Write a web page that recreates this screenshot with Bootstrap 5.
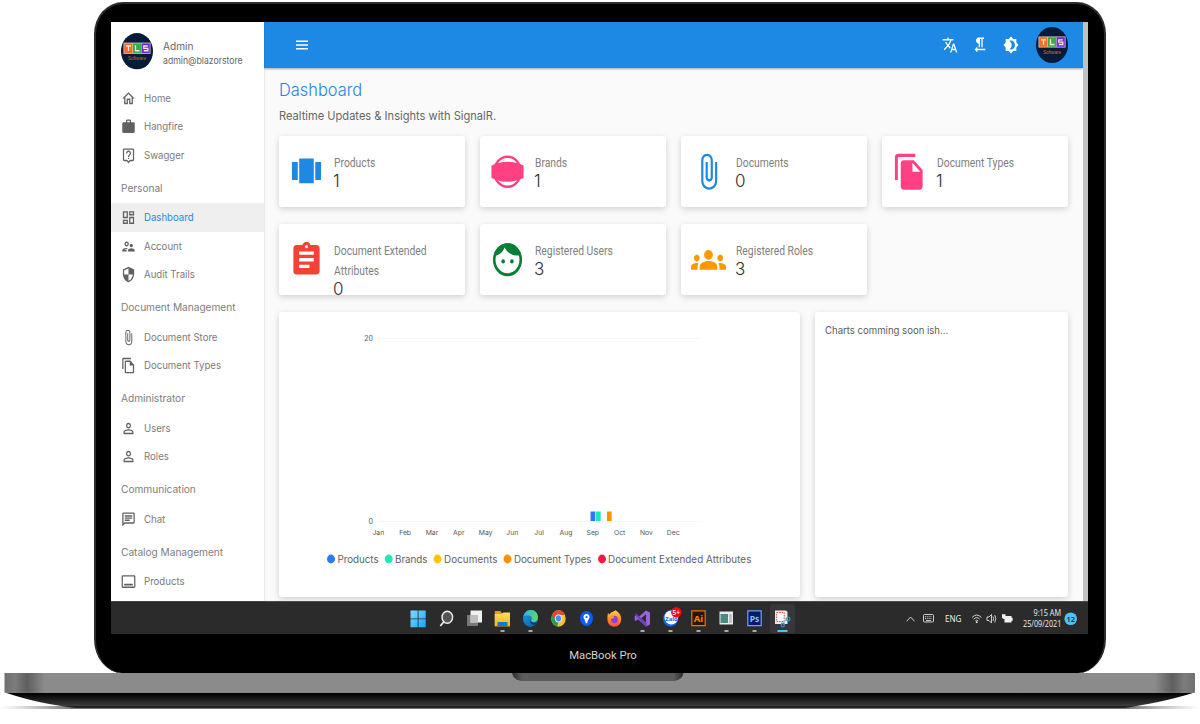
<!DOCTYPE html>
<html lang="en">
<head>
<meta charset="utf-8">
<meta name="viewport" content="width=device-width, initial-scale=1">
<title>Dashboard</title>
<link href="https://cdn.jsdelivr.net/npm/bootstrap@5.3.0/dist/css/bootstrap.min.css" rel="stylesheet">
<style>
  body { width: 1200px; height: 724px; overflow: hidden; background: #fff; font-family: "Inter", "Liberation Sans", sans-serif; color: #424242; line-height: 1; }
  svg { display: block; flex: none; }
  .lid { width: 1012px; height: 671px; margin: 2px 0 0 94px; padding: 18px 16px 0 15px; background: #000; border: 2px solid #2c2d2e; border-bottom: 0; border-radius: 29px 29px 28px 28px / 32px 32px 34px 34px; }
  .screen { height: 612px; }
  .app { height: 579px; background: #fafafa; }
  .narrow { display: inline-block; transform-origin: 0 50%; white-space: nowrap; }
  .sidebar { width: 153px; background: #fff; box-shadow: 0 0 2px rgba(0,0,0,.2); z-index: 1; }
  .who { height: 61.75px; padding: 11px 0 0 10px; }
  .who-name { margin-left: 10px; padding-top: 8px; font-size: 10.1px; color: #666; }
  .who-mail { font-size: 9.3px; margin-top: 4.5px; }
  .who-mail .narrow { transform: scaleX(.935); }
  .side-link { height: 28.5px; padding: 0 0 0 10.2px; font-size: 10.4px; color: #7a7a7a; gap: 7.5px; }
  .side-link svg { width: 15px; height: 17px; fill: #616161; }
  .side-link .narrow { transform: translateY(.7px) scaleX(.925); }
  .side-link.active { background: #efefef; color: #2f86e0; }
  .side-head { height: 34px; padding: 13.3px 0 0 10px; font-size: 10.2px; letter-spacing: -.05px; color: #808080; }
  .topbar { height: 46px; background: #1e88e5; padding: 0 15px 0 30px; box-shadow: 0 1px 2px rgba(0,0,0,.35); }
  .topbar .ico { width: 16px; height: 18px; fill: #fff; }
  .tools { gap: 14.7px; }
  .me-photo { margin-left: 2.2px; }
  .scroller { width: 5px; flex: none; background: #c1c1c1; }
  .page { padding: 13px 15px 0; }
  .page-title { font-size: 17px; font-weight: 300; color: #2783e4; margin: 0; line-height: 18px; }
  .page-title .narrow { transform: scaleX(.965); }
  .page-sub { font-size: 12px; color: #666; line-height: 16px; margin: 9px 0 12px; }
  .page-sub .narrow { transform: scaleX(.925); }
  .tiles { --bs-gutter-x: 15px; --bs-gutter-y: 17px; }
  .tile { height: 71px; background: #fff; border-radius: 3px; box-shadow: 0 2px 6px rgba(0,0,0,.17); padding-left: 10px; }
  .tile > svg { width: 35px; height: 39.5px; margin: 16px 9.5px 0 0; }
  .tile-text { padding-top: 17px; }
  .tile-label { font-family: Roboto, "Liberation Sans", sans-serif; font-size: 12px; line-height: 20px; color: #808080; }
  .tile-label .narrow { transform: scaleX(.86); }
  .tile-num { font-size: 17px; font-weight: 300; line-height: 17px; color: #303030; margin-left: -.5px; }
  .panel { height: 285px; background: #fff; border-radius: 3px; box-shadow: 0 2px 6px rgba(0,0,0,.17); }
  .soon { font-size: 10.2px; padding: 12.8px 0 0 10px; color: #5a5a5a; }
  .soon .narrow { transform: scaleX(.94); }
  .taskbar { height: 33px; background: #2b2b2b; border-top: 1px solid #4b4b4b; color: #eee; font-family: "Open Sans", "Noto Sans", sans-serif; font-size: 8px; }
  .apps { margin-left: 293px; }
  .brand-name { font-family: Roboto, "Liberation Sans", sans-serif; font-size: 11.3px; color: #d4d4d4; margin-top: 16px; padding-left: 7px; }
</style>
</head>
<body>
<svg width="0" height="0" class="position-absolute">
  <defs>
    <symbol id="avatar" viewBox="0 0 32 36" preserveAspectRatio="none">
      <ellipse cx="16" cy="18" rx="16" ry="18" fill="#071a3a"/>
      <rect x="2.5" y="9.5" width="27" height="11" fill="#e8d8d0"/>
      <rect x="3.2" y="10.2" width="8.3" height="9.6" fill="#f46d22"/>
      <rect x="12" y="10.2" width="8" height="9.6" fill="#2fb04a"/>
      <rect x="20.5" y="10.2" width="8.3" height="9.6" fill="#6a2be0"/>
      <path d="M5 12.8h5M7.5 12.8v5M14.5 12.2v5.3h4M26.8 12.800h-4v2.300h4v2.400h-4" fill="none" stroke="#ffe6dc" stroke-width="1.3"/>
      <text x="16" y="26.6" font-size="4.6" text-anchor="middle" fill="#c87020" font-family="Liberation Sans, sans-serif">Software</text>
    </symbol>
    <symbol id="person" viewBox="0 0 24 24" preserveAspectRatio="none"><path d="M12 5.9c1.16 0 2.1.94 2.1 2.1s-.94 2.1-2.1 2.1S9.9 9.16 9.9 8s.94-2.1 2.1-2.1m0 9c2.97 0 6.1 1.46 6.1 2.1v1.1H5.9V17c0-.64 3.13-2.1 6.1-2.1M12 4C9.79 4 8 5.79 8 8s1.79 4 4 4 4-1.79 4-4-1.79-4-4-4zm0 9c-2.67 0-8 1.34-8 4v3h16v-3c0-2.66-5.33-4-8-4z"/></symbol>
    <symbol id="clip" viewBox="0 0 24 24" preserveAspectRatio="none"><path d="M16.5 6v11.5c0 2.21-1.79 4-4 4s-4-1.79-4-4V5c0-1.38 1.12-2.5 2.5-2.5s2.5 1.12 2.5 2.5v10.5c0 .55-.45 1-1 1s-1-.45-1-1V6H10v9.5c0 1.38 1.12 2.5 2.5 2.5s2.5-1.12 2.5-2.5V5c0-2.21-1.79-4-4-4S7 2.79 7 5v12.5c0 3.04 2.46 5.5 5.5 5.5s5.5-2.46 5.5-5.5V6h-1.5z"/></symbol>
  </defs>
</svg>
<div class="lid">
  <div class="screen d-flex flex-column">
    <div class="app d-flex">
      <nav class="sidebar d-flex flex-column flex-shrink-0">
        <div class="who d-flex">
          <svg width="32" height="36.5"><use href="#avatar"/></svg>
          <div class="who-name"><div>Admin</div><div class="who-mail"><span class="narrow">admin@blazorstore</span></div></div>
        </div>
        <div class="side-link d-flex align-items-center"><svg viewBox="0 0 24 24" preserveAspectRatio="none"><path d="M12 5.69l5 4.5V18h-2v-6H9v6H7v-7.81l5-4.5M12 3L2 12h3v8h6v-6h2v6h6v-8h3L12 3z"/></svg><span class="narrow">Home</span></div>
        <div class="side-link d-flex align-items-center"><svg viewBox="0 0 24 24" preserveAspectRatio="none"><path d="M20 6h-4V4c0-1.11-.89-2-2-2h-4c-1.11 0-2 .89-2 2v2H4c-1.11 0-1.99.89-1.99 2L2 19c0 1.11.89 2 2 2h16c1.11 0 2-.89 2-2V8c0-1.11-.89-2-2-2zm-6 0h-4V4h4v2z"/></svg><span class="narrow">Hangfire</span></div>
        <div class="side-link d-flex align-items-center"><svg viewBox="0 0 24 24" preserveAspectRatio="none"><path d="M19 2H5c-1.11 0-2 .9-2 2v14c0 1.1.89 2 2 2h4l3 3 3-3h4c1.1 0 2-.9 2-2V4c0-1.1-.9-2-2-2zm0 16h-4.83l-.59.59L12 20.17l-1.59-1.59-.58-.58H5V4h14v14zm-8-3h2v2h-2zm1-8c1.1 0 2 .9 2 2 0 2-3 1.75-3 5h2c0-2.25 3-2.5 3-5 0-2.21-1.79-4-4-4S8 6.79 8 9h2c0-1.1.9-2 2-2z"/></svg><span class="narrow">Swagger</span></div>
        <div class="side-head">Personal</div>
        <div class="side-link active d-flex align-items-center"><svg viewBox="0 0 24 24" preserveAspectRatio="none"><path d="M19 5v2h-4V5h4M9 5v6H5V5h4m10 8v6h-4v-6h4M9 17v2H5v-2h4M21 3h-8v6h8V3zM11 3H3v10h8V3zm10 8h-8v10h8V11zm-10 4H3v6h8v-6z"/></svg><span class="narrow">Dashboard</span></div>
        <div class="side-link d-flex align-items-center"><svg viewBox="0 0 24 24" preserveAspectRatio="none"><path d="M9 12c1.93 0 3.5-1.57 3.5-3.5S10.93 5 9 5 5.5 6.57 5.5 8.5 7.07 12 9 12zm0-5c.83 0 1.5.67 1.5 1.5S9.83 10 9 10s-1.5-.67-1.5-1.5S8.17 7 9 7zm.05 10H4.77c.99-.5 2.7-1 4.23-1 .11 0 .23.01.34.01.34-.73.93-1.33 1.64-1.81-.73-.13-1.42-.2-1.98-.2-2.34 0-7 1.17-7 3.5V19h7v-1.5c0-.17.02-.34.05-.5zm7.45-2.5c-1.84 0-5.5 1.01-5.5 3V19h11v-1.5c0-1.99-3.66-3-5.5-3zm1.21-1.82c.76-.43 1.29-1.24 1.29-2.18C19 9.12 17.88 8 16.5 8S14 9.12 14 10.5c0 .94.53 1.75 1.29 2.18.36.2.77.32 1.21.32s.85-.12 1.21-.32z"/></svg><span class="narrow">Account</span></div>
        <div class="side-link d-flex align-items-center"><svg viewBox="0 0 24 24" preserveAspectRatio="none"><path d="M12 1L3 5v6c0 5.55 3.84 10.74 9 12 5.16-1.26 9-6.45 9-12V5l-9-4zm0 10.99h7c-.53 4.12-3.28 7.79-7 8.94V12H5V6.3l7-3.11v8.8z"/></svg><span class="narrow">Audit Trails</span></div>
        <div class="side-head">Document Management</div>
        <div class="side-link d-flex align-items-center"><svg><use href="#clip"/></svg><span class="narrow">Document Store</span></div>
        <div class="side-link d-flex align-items-center"><svg viewBox="0 0 24 24" preserveAspectRatio="none"><path d="M16 1H4c-1.1 0-2 .9-2 2v14h2V3h12V1zm-1 4H8c-1.1 0-1.99.9-1.99 2L6 21c0 1.1.89 2 1.99 2H19c1.1 0 2-.9 2-2V11l-6-6zM8 21V7h6v5h5v9H8z"/></svg><span class="narrow">Document Types</span></div>
        <div class="side-head">Administrator</div>
        <div class="side-link d-flex align-items-center"><svg><use href="#person"/></svg><span class="narrow">Users</span></div>
        <div class="side-link d-flex align-items-center"><svg><use href="#person"/></svg><span class="narrow">Roles</span></div>
        <div class="side-head">Communication</div>
        <div class="side-link d-flex align-items-center"><svg viewBox="0 0 24 24" preserveAspectRatio="none"><path d="M4 4h16v12H5.17L4 17.17V4m0-2c-1.1 0-1.99.9-1.99 2L2 22l4-4h14c1.1 0 2-.9 2-2V4c0-1.1-.9-2-2-2H4zm2 10h8v2H6v-2zm0-3h12v2H6V9zm0-3h12v2H6V6z"/></svg><span class="narrow">Chat</span></div>
        <div class="side-head">Catalog Management</div>
        <div class="side-link d-flex align-items-center"><svg viewBox="0 0 24 24" preserveAspectRatio="none"><path d="M21 3H3c-1.1 0-2 .9-2 2v14c0 1.1.9 2 2 2h18c1.1 0 2-.9 2-2V5c0-1.1-.9-2-2-2zm0 16H3V5h18v14zM5 15h14v2.5H5z"/></svg><span class="narrow">Products</span></div>
      </nav>
      <div class="flex-grow-1">
        <header class="topbar d-flex align-items-center">
          <svg class="ico" viewBox="0 0 24 24" preserveAspectRatio="none"><path d="M3 18h18v-2H3v2zm0-5h18v-2H3v2zm0-7v2h18V6H3z"/></svg>
          <div class="tools ms-auto d-flex align-items-center">
            <svg class="ico" viewBox="0 0 24 24" preserveAspectRatio="none"><path d="M12.87 15.07l-2.54-2.51.03-.03c1.74-1.94 2.98-4.17 3.71-6.53H17V4h-7V2H8v2H1v1.99h11.17C11.5 7.92 10.44 9.75 9 11.35 8.07 10.32 7.3 9.19 6.69 8h-2c.73 1.63 1.73 3.17 2.98 4.56l-5.09 5.02L4 19l5-5 3.11 3.11.76-2.04zM18.5 10h-2L12 22h2l1.12-3h4.75L21 22h2l-4.5-12zm-2.62 7l1.62-4.33L19.12 17h-3.24z"/></svg>
            <svg class="ico" viewBox="0 0 24 24" preserveAspectRatio="none"><path d="M10 10v5h2V4h2v11h2V4h2V2h-8C7.79 2 6 3.79 6 6s1.79 4 4 4zm-2 7v-3l-4 4 4 4v-3h12v-2H8z"/></svg>
            <svg class="ico" viewBox="0 0 24 24" preserveAspectRatio="none"><path d="M20 8.69V4h-4.69L12 .69 8.69 4H4v4.69L.69 12 4 15.31V20h4.69L12 23.31 15.31 20H20v-4.69L23.31 12 20 8.69zM12 18c-.89 0-1.74-.2-2.5-.55C11.56 16.5 13 14.42 13 12s-1.44-4.5-3.5-5.45C10.26 6.2 11.11 6 12 6c3.31 0 6 2.69 6 6s-2.69 6-6 6z"/></svg>
            <svg class="me-photo" width="32" height="36"><use href="#avatar"/></svg>
          </div>
        </header>
        <main class="page">
          <h1 class="page-title"><span class="narrow">Dashboard</span></h1>
          <p class="page-sub"><span class="narrow">Realtime Updates &amp; Insights with SignalR.</span></p>
          <div class="row tiles">
            <div class="col-3"><div class="tile d-flex"><svg viewBox="0 0 24 24" preserveAspectRatio="none" fill="#1e88e5"><path d="M7 19h10V4H7v15zm-5-2h4V6H2v11zM18 6v11h4V6h-4z"/></svg><div class="tile-text"><div class="tile-label"><span class="narrow">Products</span></div><div class="tile-num">1</div></div></div></div>
            <div class="col-3"><div class="tile d-flex"><svg viewBox="0 0 24 24" preserveAspectRatio="none" fill="#ff4081"><circle cx="12" cy="12" r="9.1" fill="none" stroke="#ff4081" stroke-width="1.6"/><path d="M1 8.2L4 7.200Q12 4.500 20 7.200L23 8.200v7.600L20 16.800Q12 19.500 4 16.800L1 15.800z"/></svg><div class="tile-text"><div class="tile-label"><span class="narrow">Brands</span></div><div class="tile-num">1</div></div></div></div>
            <div class="col-3"><div class="tile d-flex"><svg fill="#1e88e5"><use href="#clip"/></svg><div class="tile-text"><div class="tile-label"><span class="narrow">Documents</span></div><div class="tile-num">0</div></div></div></div>
            <div class="col-3"><div class="tile d-flex"><svg viewBox="0 0 24 24" preserveAspectRatio="none" fill="#ff4081"><path d="M16 1H4c-1.1 0-2 .9-2 2v14h2V3h12V1zm-1 4l6 6v10c0 1.1-.9 2-2 2H7.99C6.89 23 6 22.1 6 21l.01-14c0-1.1.89-2 1.99-2h7zm-1 7h5.5L14 6.5V12z"/></svg><div class="tile-text"><div class="tile-label"><span class="narrow">Document Types</span></div><div class="tile-num">1</div></div></div></div>
            <div class="col-3"><div class="tile d-flex"><svg viewBox="0 0 24 24" preserveAspectRatio="none" fill="#f44336"><path d="M19 3h-4.18C14.4 1.84 13.3 1 12 1c-1.3 0-2.4.84-2.82 2H5c-1.1 0-2 .9-2 2v14c0 1.1.9 2 2 2h14c1.1 0 2-.9 2-2V5c0-1.1-.9-2-2-2zm-7 0c.55 0 1 .45 1 1s-.45 1-1 1-1-.45-1-1 .45-1 1-1zm2 14H7v-2h7v2zm3-4H7v-2h10v2zm0-4H7V7h10v2z"/></svg><div class="tile-text"><div class="tile-label"><span class="narrow">Document Extended<br>Attributes</span></div><div class="tile-num">0</div></div></div></div>
            <div class="col-3"><div class="tile d-flex"><svg viewBox="0 0 24 24" preserveAspectRatio="none" fill="#087f35"><circle cx="12" cy="12" r="9.1" fill="none" stroke="#087f35" stroke-width="1.8"/><path d="M3 9.8C6.500 9 9 7.200 10 4.500c2 3.500 6 5.600 11.200 4.800C20 4.500 16.500 2 12 2S3.500 5 3 9.800z"/><circle cx="9" cy="13" r="1.25"/><circle cx="15" cy="13" r="1.25"/></svg><div class="tile-text"><div class="tile-label"><span class="narrow">Registered Users</span></div><div class="tile-num">3</div></div></div></div>
            <div class="col-3"><div class="tile d-flex"><svg viewBox="0 0 24 24" preserveAspectRatio="none" fill="#ff9800"><path d="M12 12.75c1.63 0 3.07.39 4.24.9 1.08.48 1.76 1.56 1.76 2.73V18H6v-1.61c0-1.18.68-2.26 1.76-2.73 1.17-.52 2.61-.91 4.24-.91zM4 13c1.1 0 2-.9 2-2s-.9-2-2-2-2 .9-2 2 .9 2 2 2zm1.13 1.1c-.37-.06-.74-.1-1.13-.1-.99 0-1.93.21-2.78.58C.48 14.9 0 15.62 0 16.43V18h4.5v-1.61c0-.83.23-1.61.63-2.29zM20 13c1.1 0 2-.9 2-2s-.9-2-2-2-2 .9-2 2 .9 2 2 2zm4 3.43c0-.81-.48-1.53-1.22-1.85-.85-.37-1.79-.58-2.78-.58-.39 0-.76.04-1.13.1.4.68.63 1.46.63 2.29V18H24v-1.57zM12 6c1.66 0 3 1.34 3 3s-1.34 3-3 3-3-1.34-3-3 1.34-3 3-3z"/></svg><div class="tile-text"><div class="tile-label"><span class="narrow">Registered Roles</span></div><div class="tile-num">3</div></div></div></div>
            <div class="w-100 m-0"></div>
            <div class="col-8">
              <div class="panel">
                <svg width="521" height="285" viewBox="279 312 521 285" font-family="Inter, sans-serif">
                  <path d="M378 338.500h322M378 521.500h322" stroke="#f6f6f6"/>
                  <g font-size="7" fill="#555" text-anchor="end"><text x="373" y="341.200">20</text><text x="373" y="524.200">0</text></g>
                  <g font-size="6.800" fill="#555" text-anchor="middle">
                    <text x="378.300" y="535">Jan</text><text x="405.100" y="535">Feb</text><text x="432" y="535">Mar</text><text x="458.800" y="535">Apr</text><text x="485.600" y="535">May</text><text x="512.300" y="535">Jun</text><text x="539.100" y="535">Jul</text><text x="566" y="535">Aug</text><text x="592.800" y="535">Sep</text><text x="619.600" y="535">Oct</text><text x="646.400" y="535">Nov</text><text x="673.200" y="535">Dec</text>
                  </g>
                  <path d="M590.500 511.500h4.800v9.500h-4.800z" fill="#2979ff"/><path d="M596 511.500h4.700v9.500h-4.700z" fill="#1de9b6"/><path d="M607 511.500h4.600v9.500h-4.600z" fill="#ff9100"/>
                  <ellipse cx="331" cy="559" rx="4" ry="4.400" fill="#2979ff"/><ellipse cx="388.700" cy="559" rx="4" ry="4.400" fill="#1de9b6"/><ellipse cx="437.500" cy="559" rx="4" ry="4.400" fill="#ffc400"/><ellipse cx="507.500" cy="559" rx="4" ry="4.400" fill="#ff9100"/><ellipse cx="602" cy="559" rx="4" ry="4.400" fill="#ff1744"/>
                  <g font-size="9.800" fill="#616161">
                    <text x="337.600" y="563" textLength="41">Products</text><text x="395" y="563" textLength="32.500">Brands</text><text x="444" y="563" textLength="53.500">Documents</text><text x="514" y="563" textLength="77.500">Document Types</text><text x="608" y="563" textLength="143.300">Document Extended Attributes</text>
                  </g>
                </svg>
              </div>
            </div>
            <div class="col-4"><div class="panel soon"><span class="narrow">Charts comming soon ish...</span></div></div>
          </div>
        </main>
      </div>
      <div class="scroller"></div>
    </div>
    <footer class="taskbar d-flex align-items-center">
      <div class="apps d-flex">
        <svg width="392" height="32" viewBox="404 602 392 32">
          <defs>
            <linearGradient id="win" x2="1" y2="1"><stop stop-color="#7fdcff"/><stop offset="1" stop-color="#19a5f5"/></linearGradient>
            <linearGradient id="edge" x2="1" y2="1"><stop stop-color="#1b9de2"/><stop offset="1" stop-color="#0c59a4"/></linearGradient>
            <linearGradient id="edge2"><stop stop-color="#27b5e8"/><stop offset="1" stop-color="#62d66a"/></linearGradient>
            <linearGradient id="fox" y2="1" x2="0"><stop stop-color="#ffd43a"/><stop offset="1" stop-color="#ff4a3d"/></linearGradient>
            <linearGradient id="fold" y2="1" x2="0"><stop stop-color="#ffdc60"/><stop offset="1" stop-color="#f7b51e"/></linearGradient>
          </defs>
          <rect x="770" y="604" width="25" height="29" rx="3" fill="#373737"/>
          <path d="M410.500 610.500h7.200v8h-7.200zM418.500 610.500h7.200v8h-7.200zM410.500 619.300h7.200v8h-7.200zM418.500 619.300h7.200v8h-7.200z" fill="url(#win)"/>
          <ellipse cx="447.300" cy="617.300" rx="5.300" ry="6" fill="#555" stroke="#eee" stroke-width="1.400"/><path d="M443.700 622l-3.400 4" stroke="#eee" stroke-width="1.800"/>
          <path d="M467 615h11v11h-11z" fill="#777"/><path d="M470.500 610.500h11.500v12h-11.500z" fill="#f0f0f0"/><path d="M470.500 615h7.500v7.500h-7.500z" fill="#bdbdbd"/>
          <path d="M494.800 611h5.500l1.500 2h8.200v13.200h-15.200z" fill="#e39c10"/><path d="M494.800 614h7l1.500-1.500h6.700v13.700h-15.200z" fill="url(#fold)"/><path d="M497.500 622h10v4.200h-10z" fill="#1379c9"/>
          <ellipse cx="530.500" cy="618.500" rx="7.500" ry="8.500" fill="url(#edge)"/><path d="M523.300 616.500c1.500-4.500 4-6.500 7.500-6.500 4.500 0 7.200 3.500 7.200 7.500 0 3-2 4.500-4.500 4.500-2 0-3-.8-2-2.300.8-1.500 0-4-2.500-4.200-2.500-.2-4.500.2-5.700 1z" fill="url(#edge2)"/><path d="M530.500 619.500c.5 3.500 4 4 6.500 3l-1.800 2.300c-3 .8-5.500-1.800-4.700-5.300z" fill="#1b3350"/>
          <ellipse cx="558.500" cy="618.500" rx="7.200" ry="8.200" fill="#f4c430"/><path d="M558.500 618.500L552.300 614.300A7.200 8.200 0 0 0 557.500 626.600z" fill="#2a9d4e"/><path d="M552.200 614.500A7.200 8.200 0 0 1 565 615h-6.500l-3 5z" fill="#dd4b3e"/><ellipse cx="558.500" cy="618.500" rx="3.200" ry="3.700" fill="#4a8af4" stroke="#fff" stroke-width=".9"/>
          <ellipse cx="586.500" cy="618.500" rx="6.500" ry="7.400" fill="#0b5cf0"/><path d="M586.500 614c-2 0-3 1.400-3 3 0 1.800 1.800 2.800 2.200 6.300h1.600c.4-3.500 2.200-4.500 2.200-6.300 0-1.600-1-3-3-3z" fill="#fff"/><circle cx="586.500" cy="617" r="1.100" fill="#0b5cf0"/>
          <path d="M608 613l1.500 1.500c1-1.800 2.300-2.600 3.500-2.700l2.500-1.600c2.500 2 5.700 3.500 5.700 9 0 4.500-3 7.500-6.800 7.500s-7-3-7-7.500c0-2.500.2-4.500.6-6.200z" fill="url(#fox)"/><ellipse cx="614.500" cy="619.500" rx="3.400" ry="3.700" fill="#8745cf"/><path d="M610 616.500c2-.8 4-.3 4.500.8-1 1.200-2.500 1-3.500 2z" fill="#ff9a2b"/>
          <path d="M646 610.500l4 2v12l-4 2-8-7.300-2 1.900-1.300-.8v-4l1.300-.8 2 2z" fill="#9a62e0"/><path d="M646 614.300v8.500l-5-4.300z" fill="#2b2b2b"/><path d="M634.800 614.500l1.300-1 10.500 9.500v3.400l-1 .1z" fill="#6f3fbf"/>
          <ellipse cx="670.500" cy="618.500" rx="7.500" ry="8.200" fill="#0f62e8"/><ellipse cx="671.300" cy="617.500" rx="6.800" ry="7" fill="#f7fbff"/><text x="665.300" y="620.500" font-size="5.800" font-weight="700" fill="#0f62e8">Zalo</text><ellipse cx="676.300" cy="612.300" rx="5.200" ry="5.400" fill="#f30b0b"/><text x="676.200" y="614.700" font-size="6.500" font-weight="600" text-anchor="middle" fill="#fff">5+</text>
          <path d="M691.800 610.800h13.400v14.900h-13.400z" fill="#2e1500" stroke="#e8760c" stroke-width="1.200"/><text x="698.500" y="622" font-size="9.500" font-weight="700" text-anchor="middle" fill="#f98a1c">Ai</text>
          <path d="M719.500 611.500h13.500v13h-13.500z" fill="#e8ecec"/><path d="M720.500 614h7.500v9h-7.500z" fill="#4c8a80"/><path d="M729 614h3v9h-3z" fill="#b9c4cc"/>
          <path d="M747.800 610.800h13.400v14.900h-13.400z" fill="#0a1a6a" stroke="#6fa4ea" stroke-width="1.200"/><text x="754.500" y="621.600" font-size="8.500" font-weight="700" text-anchor="middle" fill="#8ec1ff">Ps</text>
          <path d="M775 610.500h11l1.500 1.500v12h-12.500z" fill="#e9e9e9"/><path d="M776.700 612.500h7.500v9h-7.500z" fill="#fff" stroke="#d64a38" stroke-dasharray="1.500 1"/><path d="M783 622l5-3M786 618.500l-3 6" stroke="#bbb" stroke-width="1.300"/><ellipse cx="788.300" cy="619" rx="1.700" ry="1.900" fill="none" stroke="#1d9be0" stroke-width="1.200"/><ellipse cx="782.800" cy="625" rx="1.600" ry="1.800" fill="none" stroke="#1d9be0" stroke-width="1.200"/>
          <path d="M500.500 631h4M528.500 631h4M640.500 631h4M668.500 631h4M696.500 631h4M724.500 631h4M752.500 631h4" stroke="#a9a9a9" stroke-width="2"/><path d="M777.500 631h10" stroke="#4cc2ff" stroke-width="2"/>
        </svg>
      </div>
      <svg class="ms-auto" width="182" height="32" viewBox="906 602 182 32" fill="#f0f0f0">
        <g fill="none" stroke="#e0e0e0" stroke-width=".9">
          <path d="M906.700 621.300l3.900-4.300 3.900 4.300"/><rect x="923.500" y="614.500" width="10" height="7.500" rx="1"/><path d="M925 616.700h7M925 618.500h7" stroke-dasharray="1 .8"/><path d="M926 620.500h5"/>
          <path d="M972 617.500q4.700-5 9.400 0M973.700 619.200q3-3.300 6 0M975.300 620.900q1.400-1.600 2.800 0"/>
          <path d="M987 617h2l2.500-2.500v8.500l-2.500-2.500h-2zM993 616.500q1.200 2.200 0 4.500M994.700 615q2.200 3.700 0 7.500"/>
        </g>
        <circle cx="976.700" cy="622.200" r=".9"/><path d="M1004.500 616h7v6.500h-7zM1011.500 617.700h1.200v3h-1.200zM1002 614.300h3.500v3.500l-1.700 1.500-1.800-1.500z"/>
        <g font-size="8.800">
          <text transform="translate(945 621.700) scale(.92 1)">ENG</text>
          <text transform="translate(1061 615.800) scale(.83 1)" text-anchor="end">9:15 AM</text>
          <text transform="translate(1061.300 627) scale(.82 1)" text-anchor="end">25/09/2021</text>
        </g>
        <ellipse cx="1070.700" cy="618.700" rx="6.300" ry="6.300" fill="#4cc2ff"/><text x="1070.700" y="621.500" font-size="7.500" font-weight="600" text-anchor="middle" fill="#10222e">12</text>
      </svg>
    </footer>
  </div>
  <div class="brand-name text-center">MacBook Pro</div>
</div>
<svg width="1200" height="51" viewBox="0 673 1200 51">
  <defs>
    <linearGradient id="metal"><stop stop-color="#707070"/><stop offset=".009" stop-color="#7c7c7c"/><stop offset=".019" stop-color="#5f5f5f"/><stop offset=".034" stop-color="#8b8b8b"/><stop offset=".966" stop-color="#8b8b8b"/><stop offset=".981" stop-color="#5f5f5f"/><stop offset=".991" stop-color="#7c7c7c"/><stop offset="1" stop-color="#707070"/></linearGradient>
    <linearGradient id="under" y2="1" x2="0"><stop stop-color="#000"/><stop offset=".2" stop-color="#0a0a0a"/><stop offset=".85" stop-color="#3c3c3c"/><stop offset="1" stop-color="#000"/></linearGradient>
    <linearGradient id="floor"><stop stop-color="#999" stop-opacity="0"/><stop offset=".06" stop-color="#777"/><stop offset=".94" stop-color="#777"/><stop offset="1" stop-color="#999" stop-opacity="0"/></linearGradient>
    <linearGradient id="lip"><stop stop-color="#2a2a2a"/><stop offset=".06" stop-color="#5b5b5b"/><stop offset=".94" stop-color="#5b5b5b"/><stop offset="1" stop-color="#2a2a2a"/></linearGradient>
  </defs>
  <rect x="0" y="706" width="1200" height="3" fill="url(#floor)"/>
  <path d="M5 692.500h1189.500C1170 700 1145 705 1125 707.800H75C50 705 28 700 5 692.500z" fill="url(#under)"/>
  <rect x="4.500" y="672.500" width="1190.500" height="20.200" fill="url(#metal)"/>
  <path d="M512 672.500h171.500c-1 6-5 8.500-12 8.500H524c-7 0-11-2.500-12-8.500z" fill="url(#lip)"/>
</svg>
<script src="https://cdn.jsdelivr.net/npm/bootstrap@5.3.0/dist/js/bootstrap.bundle.min.js"></script>
</body>
</html>
